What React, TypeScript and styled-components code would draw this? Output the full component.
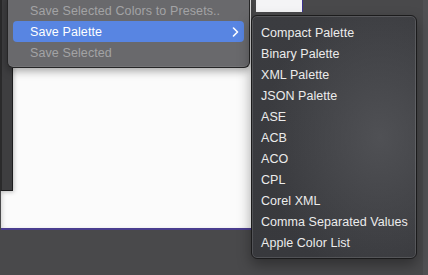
import React from "react";
import styled, { createGlobalStyle } from "styled-components";

const Global = createGlobalStyle`
  html, body { margin: 0; padding: 0; background: #49494b; }
  body { font-family: "Liberation Sans", Arial, sans-serif; -webkit-font-smoothing: antialiased; }
`;

const Page = styled.div`
  position: relative;
  width: 428px;
  height: 275px;
  overflow: hidden;
  background: #49494b;
  display: flex;
  align-items: stretch;
`;

const Workspace = styled.div`
  display: flex;
  align-items: flex-start;
  gap: 5px;
  padding-left: 1px;
`;

const DocPanel = styled.div`
  position: relative;
  width: 250px;
  height: 228px;
  background: #fbfbfb;
  border-bottom: 2px solid #4a3d8e;
  box-shadow: inset 3px 0 5px -2px rgba(0, 0, 0, 0.18);
`;

const SideStrip = styled.div`
  position: absolute;
  left: -1px;
  top: 0;
  width: 10px;
  height: 190px;
  background: #3e3e40;
  border-left: 2px solid #2a2a2b;
  border-right: 1px solid #1d1d1e;
  border-bottom: 1px solid #1d1d1e;
  box-shadow: 1px 1px 4px rgba(0, 0, 0, 0.25);
`;

const Swatch = styled.div`
  width: 46px;
  height: 12px;
  background: #f4f4f6;
  border-right: 1px solid #3b3290;
`;

const EdgeStrip = styled.div`
  margin-left: auto;
  width: 5px;
  background: #505053;
`;

const TopMenu = styled.div`
  position: absolute;
  left: 7px;
  top: -6px;
  width: 243px;
  padding: 6px 5px 4px;
  background: #69696c;
  border: 1px solid #262627;
  border-top: none;
  border-radius: 0 0 6px 6px;
  box-shadow: 0 3px 8px rgba(0, 0, 0, 0.35), inset 0 -1px 0 rgba(255, 255, 255, 0.08);
  box-sizing: border-box;
`;

const MenuRow = styled.div<{ $active?: boolean; $disabled?: boolean }>`
  display: flex;
  align-items: center;
  justify-content: space-between;
  height: 21px;
  padding: 0 5px 0 17px;
  border-radius: 4px;
  font-size: 12.5px;
  letter-spacing: 0.1px;
  color: ${(p) => (p.$disabled ? "#a3a3a5" : "#ffffff")};
  background: ${(p) => (p.$active ? "#5885e2" : "transparent")};
  white-space: nowrap;
`;

const SubMenu = styled.div`
  position: absolute;
  left: 251px;
  top: 15px;
  width: 166px;
  padding: 6px 0 5px;
  box-sizing: border-box;
  border: 1px solid #1b1b1c;
  border-radius: 6px;
  background:
    radial-gradient(ellipse 70% 60% at 78% 50%, rgba(82, 83, 87, 0.9), rgba(82, 83, 87, 0) 100%),
    linear-gradient(180deg, #3b3c40 0%, #38393d 100%);
  box-shadow: inset 0 0 0 1px rgba(255, 255, 255, 0.13), 0 6px 14px rgba(0, 0, 0, 0.35);
`;

const SubItem = styled.div`
  height: 21px;
  display: flex;
  align-items: center;
  padding-left: 9px;
  font-size: 12.5px;
  letter-spacing: 0.05px;
  color: #ececec;
  white-space: nowrap;
`;

const Chevron = () => (
  <svg width="7" height="10" viewBox="0 0 7 10" aria-hidden>
    <polyline points="1.5,1 5.5,5 1.5,9" fill="none" stroke="#ffffff" strokeWidth="1.6" strokeLinecap="round" strokeLinejoin="round" />
  </svg>
);

const formats = [
  "Compact Palette",
  "Binary Palette",
  "XML Palette",
  "JSON Palette",
  "ASE",
  "ACB",
  "ACO",
  "CPL",
  "Corel XML",
  "Comma Separated Values",
  "Apple Color List",
];

export default function App() {
  return (
    <Page>
      <Global />
      <Workspace>
        <DocPanel>
          <SideStrip />
        </DocPanel>
        <Swatch />
      </Workspace>
      <EdgeStrip />
      <TopMenu>
        <MenuRow $disabled>Save Selected Colors to Presets..</MenuRow>
        <MenuRow $active>
          <span>Save Palette</span>
          <Chevron />
        </MenuRow>
        <MenuRow $disabled>Save Selected</MenuRow>
      </TopMenu>
      <SubMenu>
        {formats.map((f) => (
          <SubItem key={f}>{f}</SubItem>
        ))}
      </SubMenu>
    </Page>
  );
}
